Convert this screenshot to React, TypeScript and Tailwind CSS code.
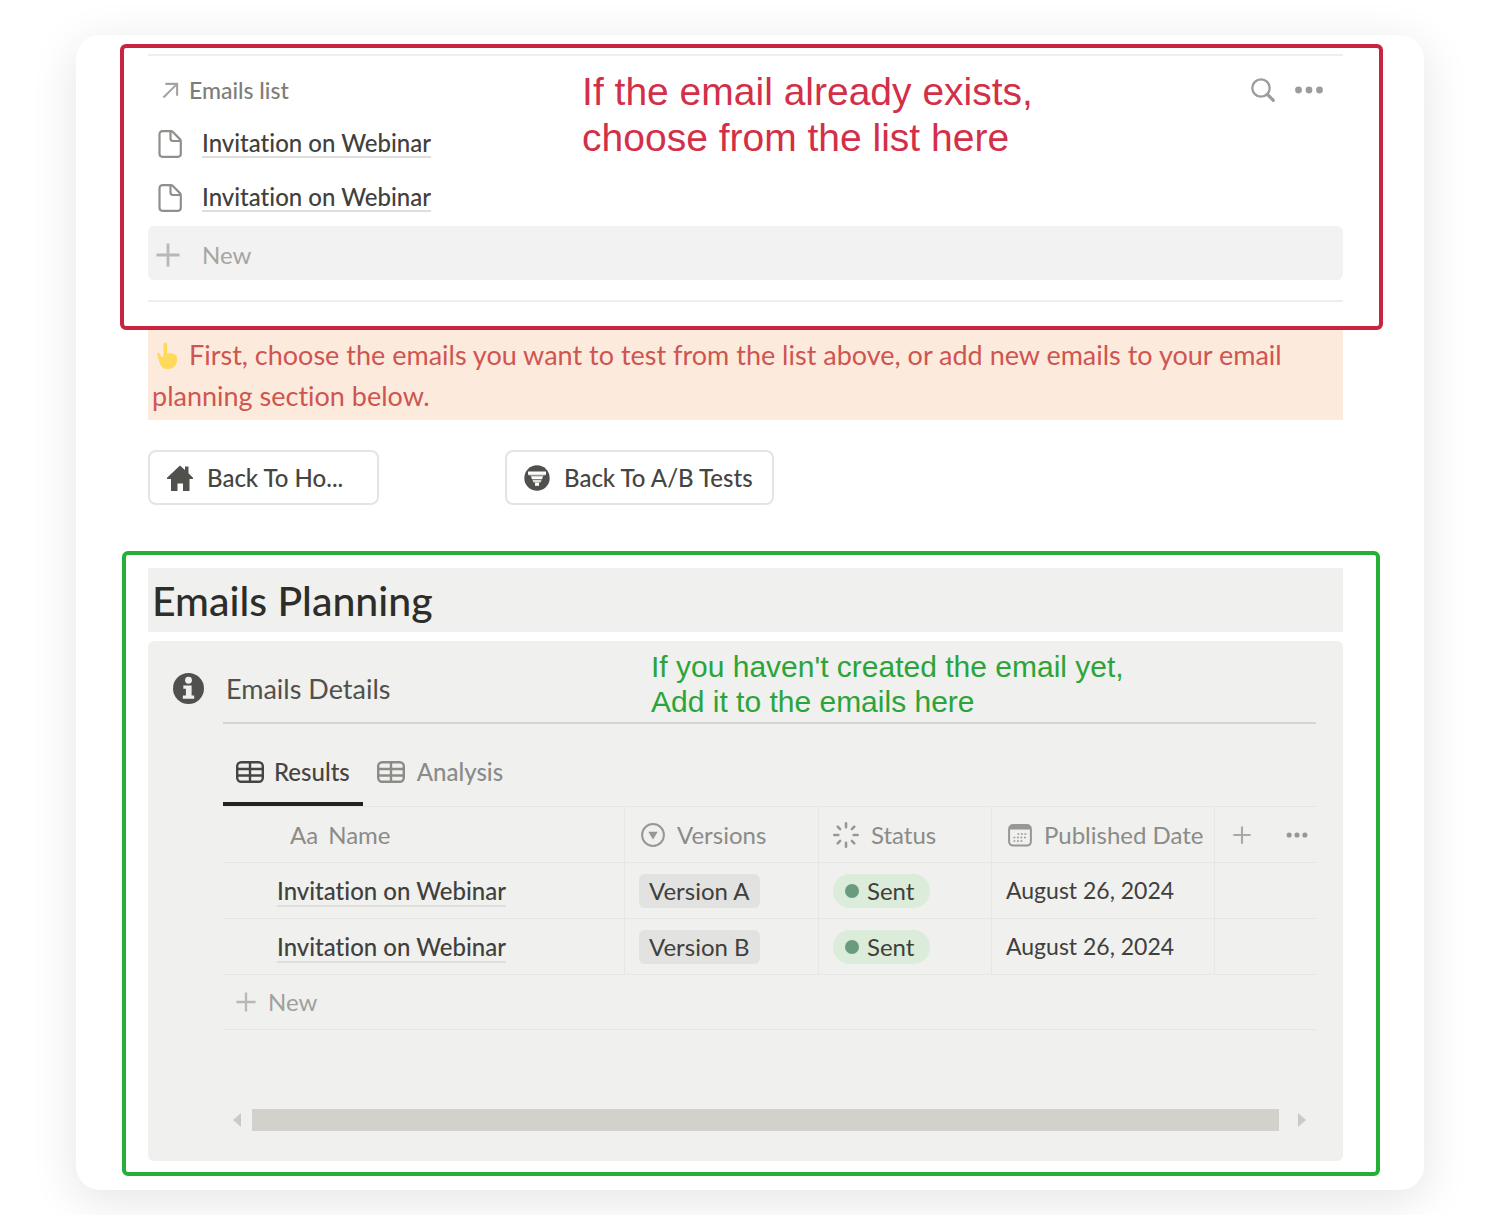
import type { ReactNode } from "react";

type IconProps = { className?: string };

function ArrowUpRightIcon({ className }: IconProps) {
  return (
    <svg viewBox="0 0 18 18" className={className} fill="none" stroke="currentColor" strokeWidth="2.2" aria-hidden="true">
      <path d="M1.5 16.5 16 2M3.500 2h12.500v12.500" />
    </svg>
  );
}

function PageIcon({ className }: IconProps) {
  return (
    <svg viewBox="0 0 24 28" className={className} fill="none" stroke="currentColor" strokeWidth="2.2" strokeLinejoin="round" aria-hidden="true">
      <path d="M4.5 1.2h8.300a3 3 0 0 1 2.100.900l7 7a3 3 0 0 1 .900 2.100V23.800a3 3 0 0 1-3 3H4.500a3 3 0 0 1-3-3V4.200a3 3 0 0 1 3-3Z" />
      <path d="M12.500 1.500v7a2.500 2.500 0 0 0 2.500 2.500h7.300" />
    </svg>
  );
}

function PlusIcon({ className }: IconProps) {
  return (
    <svg viewBox="0 0 24 24" className={className} fill="none" stroke="currentColor" strokeWidth="2.8" aria-hidden="true">
      <path d="M12 0.500v23M0.500 12h23" />
    </svg>
  );
}

function SearchIcon({ className }: IconProps) {
  return (
    <svg viewBox="0 0 24 24" className={className} fill="none" stroke="currentColor" aria-hidden="true">
      <circle cx="10" cy="10" r="8.700" strokeWidth="2.300" />
      <path d="m16.500 16.500 5.800 5.800" strokeWidth="3.200" strokeLinecap="round" />
    </svg>
  );
}

function DotsIcon({ className }: IconProps) {
  return (
    <svg viewBox="0 0 28 8" className={className} fill="currentColor" aria-hidden="true">
      <circle cx="3.500" cy="4" r="3.400" />
      <circle cx="14" cy="4" r="3.400" />
      <circle cx="24.500" cy="4" r="3.400" />
    </svg>
  );
}

function PointerIcon({ className }: IconProps) {
  return (
    <svg viewBox="0 0 20 27" className={className} fill="#ffd95a" aria-hidden="true">
      <path d="M6.500 2.300a1.800 1.800 0 0 1 3.600 0v9.200c2-.800 9.600.200 9.900 4 .600 6.500-2.500 11.500-8.700 11.500-5 0-7.500-2.500-8.700-6.600L.200 13c-.700-2.400 1.800-3 2.600-1.200l1.700 3.500 2-1Z" />
    </svg>
  );
}

function HomeIcon({ className }: IconProps) {
  return (
    <svg viewBox="0 0 26 26" className={className} fill="currentColor" aria-hidden="true">
      <path d="M13 .5 18 5V1.500h3.500V8.300L26 12.800V14h-3.500v12h-6.500v-7.500h-5.500V26H4V14H0v-1.200Z" />
    </svg>
  );
}

function FilterCircleIcon({ className }: IconProps) {
  return (
    <svg viewBox="0 0 26 26" className={className} aria-hidden="true">
      <circle cx="13" cy="13" r="12.700" fill="currentColor" />
      <g fill="#fff">
        <path d="M4 6.500h18v3.300H4Z" />
        <path d="M4 9.800h18l-2 1.300H6Z" opacity=".4" />
        <path d="M7 11.300h12l-1 3H8Z" />
        <path d="M8.500 15h9l-1 2.600h-7Z" opacity=".8" />
        <path d="M11 17.600h4v3.200h-4Z" />
      </g>
    </svg>
  );
}

function InfoIcon({ className }: IconProps) {
  return (
    <svg viewBox="0 0 30 30" className={className} aria-hidden="true">
      <circle cx="15" cy="15" r="15" fill="currentColor" />
      <g fill="#f0f0ee">
        <circle cx="15" cy="7" r="3.300" />
        <path d="M10 12h8v9.800h2.500v3.200h-11v-3.200H12.500v-6.600H10Z" />
      </g>
    </svg>
  );
}

function TableIcon({ className }: IconProps) {
  return (
    <svg viewBox="0 0 28 22" className={className} fill="none" stroke="currentColor" strokeWidth="2.400" aria-hidden="true">
      <rect x="1.200" y="1.200" width="25.600" height="19.600" rx="4" />
      <path d="M1.200 8h25.600M1.200 14.500h25.600M14 1.200v19.600" />
    </svg>
  );
}

function SelectIcon({ className }: IconProps) {
  return (
    <svg viewBox="0 0 24 24" className={className} aria-hidden="true">
      <circle cx="12" cy="12" r="10.900" fill="none" stroke="currentColor" strokeWidth="2" />
      <path d="M7.300 8.700h9.400L12 16.500Z" fill="currentColor" />
    </svg>
  );
}

function StatusIcon({ className }: IconProps) {
  return (
    <svg viewBox="0 0 26 26" className={className} stroke="currentColor" strokeWidth="2.600" strokeLinecap="round" aria-hidden="true">
      <path d="M13 1.300v4M13 20.700v4M1.300 13h4M20.700 13h4M4.700 4.700l2.400 2.400M18.900 18.900l2.400 2.400M4.700 21.300l2.400-2.400M18.900 7.100l2.400-2.400" />
    </svg>
  );
}

function CalendarIcon({ className }: IconProps) {
  return (
    <svg viewBox="0 0 24 24" className={className} fill="none" stroke="currentColor" aria-hidden="true">
      <rect x="1.100" y="2.100" width="21.800" height="20.500" rx="4" strokeWidth="2" />
      <path d="M2 4.500h20" strokeWidth="4" />
      <path d="M9.500 11h9M5.500 14.500h13M5.500 18h9" strokeWidth="1.600" strokeDasharray="1.800 1.700" />
    </svg>
  );
}

function TriangleIcon({ className }: IconProps) {
  return (
    <svg viewBox="0 0 8 14" className={className} fill="currentColor" aria-hidden="true">
      <path d="M8 0v14L0 7Z" />
    </svg>
  );
}

function PageLink({ children }: { children: ReactNode }) {
  return (
    <a href="#email" className="border-b-2 border-[#dededc] text-2xl leading-[26px] font-medium text-[#40403d]">
      {children}
    </a>
  );
}

const emails = [
  { name: "Invitation on Webinar", version: "Version A", status: "Sent", date: "August 26, 2024" },
  { name: "Invitation on Webinar", version: "Version B", status: "Sent", date: "August 26, 2024" },
];

function EmailsList() {
  return (
    <section className="relative rounded-md border-4 border-[#c9243f] pt-1.5 pr-9 pb-6 pl-6">
      <div className="flex h-16 items-center justify-between border-t-2 border-[#eeeeec] pt-1.5 pr-5 pl-3.5">
        <h2 className="flex items-center gap-2.5 text-[23px] font-medium text-[#7d7d7a]">
          <ArrowUpRightIcon className="size-[17px] text-[#a3a3a0]" />
          Emails list
        </h2>
        <div className="flex items-center gap-5 text-[#9c9c99]">
          <button type="button" aria-label="Search">
            <SearchIcon className="size-6" />
          </button>
          <button type="button" aria-label="More options">
            <DotsIcon className="h-2 w-7" />
          </button>
        </div>
      </div>
      <ul>
        {emails.map((email) => (
          <li key={email.version} className="flex h-[54px] items-center gap-5 pb-0.5 pl-2.5">
            <PageIcon className="h-7 w-6 text-[#8f8f8c]" />
            <PageLink>{email.name}</PageLink>
          </li>
        ))}
      </ul>
      <button type="button" className="flex h-[54px] w-full items-center gap-[22px] rounded-md bg-[#f2f2f2] pt-1 pl-2 text-2xl text-[#a5a5a3]">
        <PlusIcon className="size-6 text-[#b8b8b6]" />
        New
      </button>
      <div className="mt-5 border-t-2 border-[#eeeeec]" />
      <p className="pointer-events-none absolute top-[21px] left-[36.500%] text-[39px] leading-[46px] text-[#d42f48] [font-family:'Liberation_Sans',Arial,sans-serif]">
        If the email already exists,
        <br />
        choose from the list here
      </p>
    </section>
  );
}

function EmailsTable() {
  const head = "border-t border-b border-[#e6e6e4] text-left font-normal";
  const cell = "border-b border-[#e6e6e4]";
  return (
    <table className="w-full table-fixed border-separate border-spacing-0 text-2xl text-[#3f3f3c]">
      <colgroup>
        <col />
        <col className="w-[194px]" />
        <col className="w-[173px]" />
        <col className="w-[223px]" />
        <col className="w-[101px]" />
      </colgroup>
      <thead className="text-[#8b8b88]">
        <tr className="h-[57px]">
          <th className={`${head} border-r pl-[67px]`}>
            <span className="flex items-center gap-2.5">
              <span aria-hidden="true">Aa</span>Name
            </span>
          </th>
          <th className={`${head} border-r pl-4`}>
            <span className="flex items-center gap-3">
              <SelectIcon className="size-6 text-[#979794]" />
              Versions
            </span>
          </th>
          <th className={`${head} border-r pl-3.5`}>
            <span className="flex items-center gap-3">
              <StatusIcon className="size-[26px] text-[#979794]" />
              Status
            </span>
          </th>
          <th className={`${head} border-r pl-4`}>
            <span className="flex items-center gap-3">
              <CalendarIcon className="size-6 text-[#979794]" />
              Published Date
            </span>
          </th>
          <th className={`${head} pr-2 pl-[18px]`}>
            <span className="flex items-center justify-between text-[#979794]">
              <button type="button" aria-label="Add property">
                <PlusIcon className="size-[18px] text-[#a8a8a5]" />
              </button>
              <button type="button" aria-label="Table options">
                <DotsIcon className="h-1.5 w-[22px]" />
              </button>
            </span>
          </th>
        </tr>
      </thead>
      <tbody>
        {emails.map((email) => (
          <tr key={email.version} className="h-14">
            <td className={`${cell} border-r pl-[54px]`}>
              <PageLink>{email.name}</PageLink>
            </td>
            <td className={`${cell} border-r pl-3.5`}>
              <span className="inline-flex h-[34px] items-center rounded-md bg-[#e2e2e0] px-2.5">{email.version}</span>
            </td>
            <td className={`${cell} border-r pl-3.5`}>
              <span className="inline-flex h-[34px] items-center gap-2 rounded-full bg-[#dbecdb] pr-4 pl-3">
                <span className="size-3.5 rounded-full bg-[#6a9b7e]" />
                {email.status}
              </span>
            </td>
            <td className={`${cell} border-r pl-3.5 text-[23px]`}>{email.date}</td>
            <td className={cell} />
          </tr>
        ))}
      </tbody>
    </table>
  );
}

function EmailsPlanning() {
  return (
    <section className="relative mt-[46px] mr-[3px] ml-0.5 rounded-md border-4 border-[#24b035] pt-[13px] pr-[33px] pb-[11px] pl-[22px]">
      <h1 className="flex h-16 items-center bg-[#f0f0ee] px-1 pt-0.5 text-[41px] font-medium text-[#2d2d2a]">Emails Planning</h1>
      <div className="mt-[9px] flex gap-[19px] rounded-md bg-[#f0f0ee] pr-[27px] pb-[30px] pl-[25px]">
        <InfoIcon className="mt-8 size-[31px] shrink-0 text-[#50504d]" />
        <div className="min-w-0 grow">
          <h2 className="flex h-[83px] items-center border-b-2 border-[#d4d4d2] px-[3px] pt-4 text-[27px] text-[#50504d]">Emails Details</h2>
          <div role="tablist" className="flex h-[82px] text-2xl font-medium">
            <button type="button" role="tab" aria-selected="true" className="flex items-center gap-2.5 border-b-4 border-[#22221f] px-[13px] pt-[18px] text-[#454542]">
              <TableIcon className="h-[22px] w-7" />
              Results
            </button>
            <button type="button" role="tab" aria-selected="false" className="flex items-center gap-3 border-b-4 border-transparent px-3.5 pt-[18px] text-[#8b8b88]">
              <TableIcon className="h-[22px] w-7" />
              Analysis
            </button>
          </div>
          <EmailsTable />
          <button type="button" className="flex h-[55px] w-full items-center gap-3 border-b border-[#e6e6e4] pl-[13px] text-2xl text-[#a0a09d]">
            <PlusIcon className="size-5 text-[#b8b8b6]" />
            New
          </button>
          <div className="mt-[79px] flex h-[22px] items-center gap-[11px] pr-2.5 pl-2.5 text-[#cacac8]">
            <button type="button" aria-label="Scroll left">
              <TriangleIcon className="h-3.5 w-2" />
            </button>
            <div className="h-full grow bg-[#d2d1cc]" />
            <button type="button" aria-label="Scroll right" className="ml-2">
              <TriangleIcon className="h-3.5 w-2 rotate-180" />
            </button>
          </div>
        </div>
      </div>
      <p className="pointer-events-none absolute top-[94px] left-[42%] text-[30px] leading-[35px] text-[#2ba43a] [font-family:'Liberation_Sans',Arial,sans-serif]">
        If you haven't created the email yet,
        <br />
        Add it to the emails here
      </p>
    </section>
  );
}

export default function App() {
  const linkButton = "flex h-[55px] items-center gap-3.5 rounded-lg border-2 border-[#e4e4e3] pl-[17px] text-2xl font-medium text-[#454542]";
  return (
    <div className="min-h-screen overflow-hidden bg-white px-[76px] pt-[35px] pb-[25px] [font-family:Lato,'Open_Sans',sans-serif] [font-variant-ligatures:none]">
      <main className="rounded-3xl bg-white pt-[9px] pr-[41px] pb-3.5 pl-11 shadow-[0_10px_48px_rgba(0,0,0,0.11)]">
        <EmailsList />
        <p className="mr-10 ml-7 bg-[#fcebdd] px-1 py-1 text-[27px] leading-[41px] text-[#cf5550]">
          <PointerIcon className="mr-3 ml-[5px] inline-block h-[27px] w-5 align-[-4px]" />
          First, choose the emails you want to test from the list above, or add new emails to your email planning section below.
        </p>
        <nav className="mt-[30px] ml-7 flex gap-[126px]">
          <button type="button" className={`${linkButton} w-[231px]`}>
            <HomeIcon className="size-[26px] text-[#50504d]" />
            Back To Ho...
          </button>
          <button type="button" className={`${linkButton} w-[269px]`}>
            <FilterCircleIcon className="size-[26px] text-[#50504d]" />
            Back To A/B Tests
          </button>
        </nav>
        <EmailsPlanning />
      </main>
    </div>
  );
}
